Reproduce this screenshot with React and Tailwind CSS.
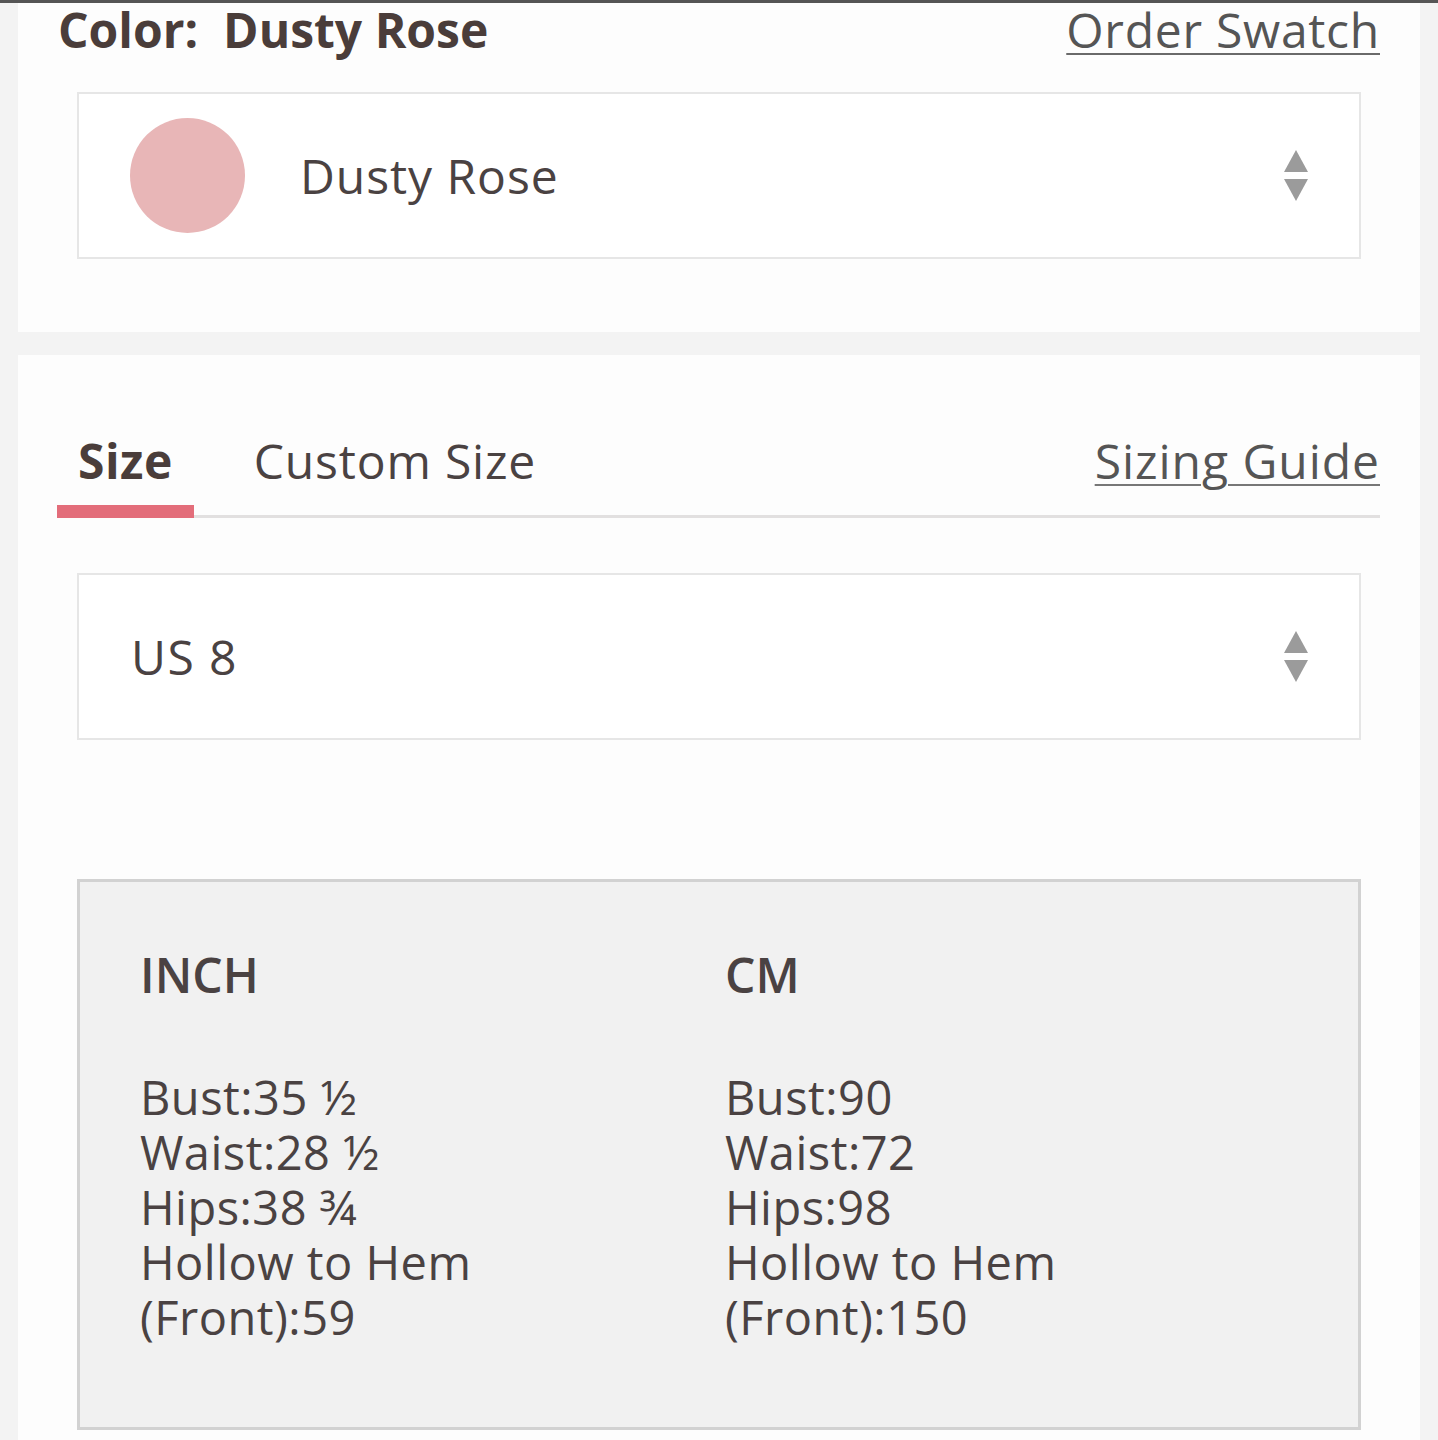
import React from "react";

const font = { fontFamily: '"Open Sans", "Liberation Sans", sans-serif' };

function UpDown() {
  return (
    <svg width="24" height="52" viewBox="0 0 24 52" className="shrink-0">
      <path d="M12 0 L24 22 L0 22 Z" fill="#9b9b9b" />
      <path d="M0 29 L24 29 L12 51 Z" fill="#9b9b9b" />
    </svg>
  );
}

const inch = ["Bust:35 ½", "Waist:28 ½", "Hips:38 ¾", "Hollow to Hem", "(Front):59"];
const cm = ["Bust:90", "Waist:72", "Hips:98", "Hollow to Hem", "(Front):150"];

export default function App() {
  return (
    <div
      className="min-h-[1440px] w-full bg-[#f3f3f3] border-t-[3px] border-[#555555] px-[18px]"
      style={font}
    >
      {/* colour panel */}
      <div className="bg-[#fdfdfd] h-[329px] px-[40px] pt-[3px]">
        <div className="flex items-start justify-between">
          <h2 className="text-[48px] font-bold text-[#4a3d3a] leading-none">
            Color:&nbsp; Dusty Rose
          </h2>
          <a href="#" className="text-[48px] text-[#555] tracking-[0.015em] underline underline-offset-[5px] decoration-2 decoration-[#6a6a6a] leading-none">
            Order Swatch
          </a>
        </div>
        <div className="mx-[19px] mt-[38px] h-[167px] bg-white border-2 border-[#e6e6e6] flex items-center pl-[51px] pr-[51px]">
          <div className="w-[115px] h-[115px] rounded-full bg-[#e8b6b7]" />
          <span className="ml-[55px] text-[48px] tracking-[0.02em] text-[#4a4242] flex-1 leading-none">Dusty Rose</span>
          <UpDown />
        </div>
      </div>

      {/* size panel */}
      <div className="bg-[#fdfdfd] mt-[23px] min-h-[1085px] px-[40px] pt-[82px]">
        <div className="flex items-end border-b-[3px] border-[#e2e0e0] -ml-px">
          <button className="px-[21px] pb-[20px] text-[48px] font-bold tracking-[0.01em] text-[#4a3d3a] leading-none border-b-[13px] border-[#e36d7a] -mb-[3px]">
            Size
          </button>
          <button className="ml-[60px] pb-[30px] text-[48px] tracking-[0.017em] text-[#4a4242] leading-none">
            Custom Size
          </button>
          <a href="#" className="ml-auto pb-[30px] text-[48px] tracking-[0.02em] text-[#555] underline underline-offset-[5px] decoration-2 decoration-[#777] leading-none">
            Sizing Guide
          </a>
        </div>

        <div className="mx-[19px] mt-[55px] h-[167px] bg-white border-2 border-[#e6e6e6] flex items-center pl-[52px] pr-[51px]">
          <span className="text-[48px] tracking-[0.03em] text-[#4a4242] flex-1 leading-none">US 8</span>
          <UpDown />
        </div>

        <div className="mx-[19px] mt-[139px] h-[551px] bg-[#f1f1f1] border-[3px] border-[#d2d2d2] flex pl-[60px] pt-[69px] text-[#4a4242]">
          <div className="w-[585px]">
            <div className="text-[48px] font-semibold leading-none">INCH</div>
            <div className="mt-[71px] text-[47px] tracking-[0.01em] leading-[55px]">
              {inch.map((t) => (
                <div key={t}>{t}</div>
              ))}
            </div>
          </div>
          <div>
            <div className="text-[48px] font-semibold leading-none">CM</div>
            <div className="mt-[71px] text-[47px] tracking-[0.01em] leading-[55px]">
              {cm.map((t) => (
                <div key={t}>{t}</div>
              ))}
            </div>
          </div>
        </div>
      </div>
    </div>
  );
}
